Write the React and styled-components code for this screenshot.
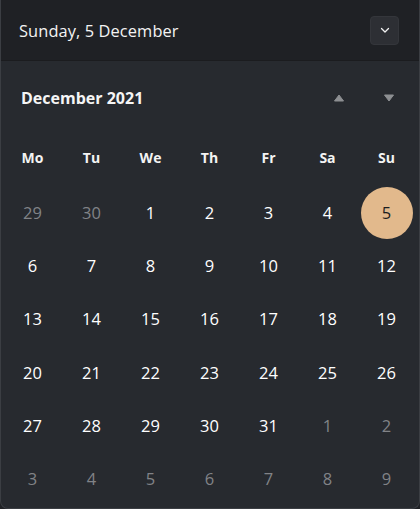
import React from 'react';
import styled, { createGlobalStyle } from 'styled-components';

const GlobalStyle = createGlobalStyle`
  html, body {
    margin: 0;
    padding: 0;
    background: #202226;
  }
  body {
    font-family: 'Open Sans', 'Noto Sans', sans-serif;
  }
`;

const weekDays = ['Mo', 'Tu', 'We', 'Th', 'Fr', 'Sa', 'Su'];

const buildDays = () => {
  const days = [29, 30].map((d) => ({ d, muted: true }));
  for (let d = 1; d <= 31; d++) days.push({ d, muted: false, today: d === 5 });
  for (let d = 1; d <= 9; d++) days.push({ d, muted: true });
  return days;
};

const App = () => {
  const days = buildDays();

  return (
    <>
      <GlobalStyle />
      <Panel>
        <Header>
          <Title>Sunday, 5 December</Title>
          <CollapseButton aria-label='collapse'>
            <svg width='12' height='12' viewBox='0 0 12 12'>
              <path d='M2.5 4.5 L6 8 L9.5 4.5' fill='none' stroke='#f2f2f2' strokeWidth='1.3' strokeLinecap='round' strokeLinejoin='round' />
            </svg>
          </CollapseButton>
        </Header>
        <Body>
          <MonthBar>
            <Month>December 2021</Month>
            <Arrows>
              <ArrowButton aria-label='previous'>
                <svg width='12' height='10' viewBox='0 0 12 10'>
                  <path d='M6 2 L10.5 8 L1.5 8 Z' fill='#8d8f92' strokeLinejoin='round' stroke='#8d8f92' strokeWidth='1' />
                </svg>
              </ArrowButton>
              <ArrowButton aria-label='next'>
                <svg width='12' height='10' viewBox='0 0 12 10'>
                  <path d='M1.5 2 L10.5 2 L6 8 Z' fill='#8d8f92' strokeLinejoin='round' stroke='#8d8f92' strokeWidth='1' />
                </svg>
              </ArrowButton>
            </Arrows>
          </MonthBar>
          <Grid>
            {weekDays.map((w) => (
              <WeekDay key={w}>{w}</WeekDay>
            ))}
            {days.map((day, idx) => (
              <Cell key={idx}>
                <Day muted={day.muted} today={day.today}>
                  {day.d}
                </Day>
              </Cell>
            ))}
          </Grid>
        </Body>
      </Panel>
    </>
  );
};

const Panel = styled.div`
  width: 420px;
  height: 509px;
  box-sizing: border-box;
  background: #272a2f;
  border: 1px solid #3b3e43;
  border-top: none;
  border-radius: 0 0 8px 8px;
  overflow: hidden;
  color: #ffffff;
`;

const Header = styled.div`
  height: 60px;
  background: #1f2125;
  border-bottom: 1px solid #1b1c1f;
  display: flex;
  align-items: center;
  justify-content: space-between;
  padding: 0 21px 0 19px;
  margin: 0 -1px;
`;

const Title = styled.span`
  font-size: 16.4px;
  color: #f3f3f3;
  letter-spacing: 0.1px;
`;

const CollapseButton = styled.div`
  width: 29px;
  height: 29px;
  border-radius: 4px;
  background: #2d2f34;
  border: 1px solid #34363b;
  box-sizing: border-box;
  display: flex;
  align-items: center;
  justify-content: center;
`;

const Body = styled.div`
  padding: 0 2px;
`;

const MonthBar = styled.div`
  height: 74px;
  display: flex;
  align-items: center;
  justify-content: space-between;
  padding: 0 18px 0 18px;
  box-sizing: border-box;
`;

const Month = styled.span`
  font-size: 16px;
  font-weight: 700;
  color: #f5f5f5;
`;

const Arrows = styled.div`
  display: flex;
  gap: 30px;
`;

const ArrowButton = styled.div`
  width: 20px;
  height: 20px;
  display: flex;
  align-items: center;
  justify-content: center;
`;

const Grid = styled.div`
  display: grid;
  grid-template-columns: repeat(7, 59px);
  grid-template-rows: 51px;
  grid-auto-rows: 53.2px;
`;

const WeekDay = styled.div`
  display: flex;
  align-items: center;
  justify-content: center;
  font-size: 14px;
  font-weight: 700;
  color: #f3f3f3;
  padding-bottom: 7px;
`;

const Cell = styled.div`
  display: flex;
  align-items: center;
  justify-content: center;
`;

const Day = styled.div`
  width: 52px;
  height: 52px;
  border-radius: 50%;
  display: flex;
  align-items: center;
  justify-content: center;
  font-size: 16.5px;
  color: ${({ muted, today }) => (today ? '#1c1d20' : muted ? '#818387' : '#ffffff')};
  background: ${({ today }) => (today ? '#e2b98c' : 'transparent')};
`;

export default App;
